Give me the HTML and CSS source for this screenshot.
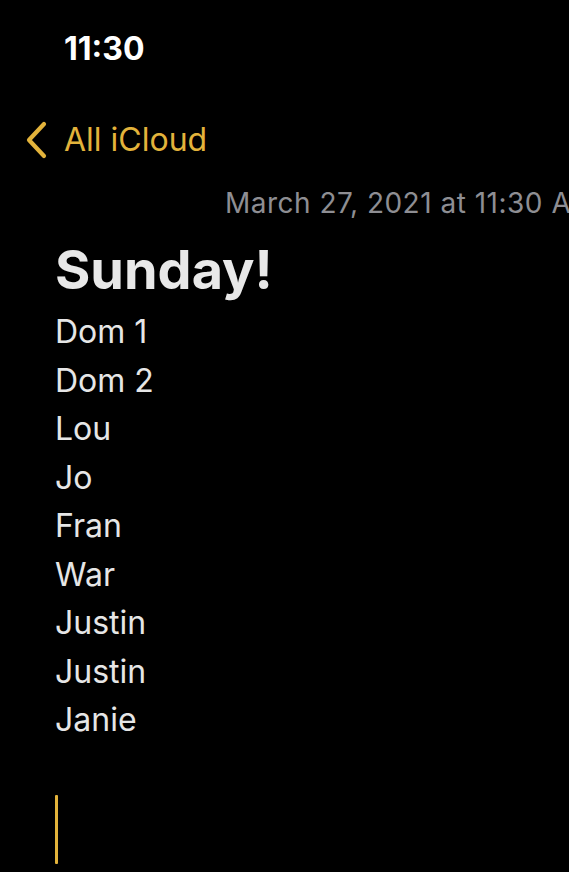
FILE: index.html
```html
<!DOCTYPE html>
<html>
<head>
<meta charset="utf-8">
<link rel="stylesheet" href="styles.css">
</head>
<body>
<div class="screen">
  <div class="status">11:30</div>
  <div class="nav">
    <svg class="chev" width="24" height="38" viewBox="0 0 24 38"><path d="M20 3 L5 19 L20 35" fill="none" stroke="#e3b33b" stroke-width="4.2" stroke-linecap="round" stroke-linejoin="round"/></svg>
    <span class="back">All iCloud</span>
  </div>
  <div class="date">March 27, 2021 at 11:30 AM</div>
  <div class="note">
    <h1 class="title">Sunday!</h1>
    <div class="lines">
      <div class="line">Dom 1</div>
      <div class="line">Dom 2</div>
      <div class="line">Lou</div>
      <div class="line">Jo</div>
      <div class="line">Fran</div>
      <div class="line">War</div>
      <div class="line">Justin</div>
      <div class="line">Justin</div>
      <div class="line">Janie</div>
    </div>
    <div class="cursor"></div>
  </div>
</div>
</body>
</html>
```
FILE: styles.css
```css
html, body {
  margin: 0;
  padding: 0;
  background: #000;
  overflow: hidden;
}
.screen {
  width: 569px;
  height: 872px;
  overflow: hidden;
  font-family: Inter, "Noto Sans", sans-serif;
  color: #e6e6e6;
}
.status {
  margin-top: 29px;
  padding-left: 64px;
  font-size: 32px;
  font-weight: 700;
  color: #fff;
  line-height: 40px;
  height: 40px;
}
.nav {
  display: flex;
  align-items: center;
  margin-top: 51px;
  padding-left: 24px;
  height: 40px;
}
.chev {
  display: block;
}
.back {
  margin-left: 16px;
  font-size: 32px;
  color: #e3b33b;
  line-height: 40px;
}
.date {
  margin-top: 26px;
  padding-left: 225px;
  font-size: 28px;
  letter-spacing: 0.5px;
  color: #8e8e93;
  white-space: nowrap;
  line-height: 34px;
  height: 34px;
}
.note {
  padding-left: 55px;
}
.title {
  margin: 18px 0 0 0;
  font-size: 54px;
  font-weight: 700;
  line-height: 64px;
  height: 64px;
  color: #e8e8e8;
}
.lines {
  margin-top: 6px;
}
.line {
  font-size: 32px;
  line-height: 48.5px;
  color: #e6e6e6;
}
.cursor {
  margin-top: 50px;
  width: 3px;
  height: 69px;
  background: #e3b33b;
  border-radius: 1px;
}
```
